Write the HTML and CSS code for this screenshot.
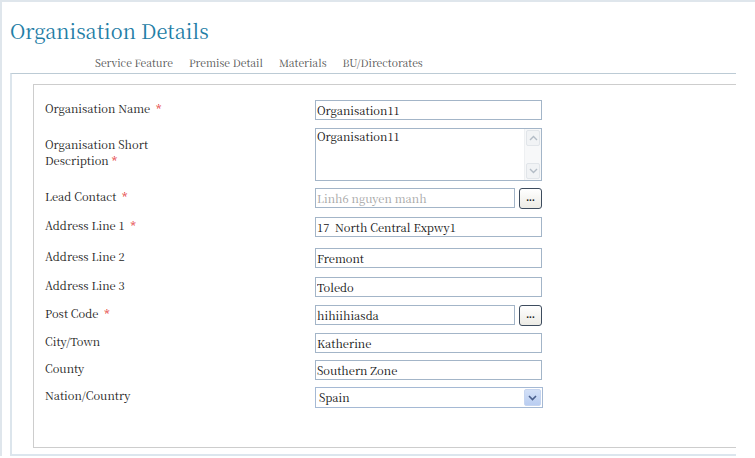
FILE: index.html
```html
<!DOCTYPE html>
<html>
<head>
<meta charset="utf-8">
<link rel="stylesheet" href="styles.css">
</head>
<body>
<div class="page">
  <h1 class="title">Organisation Details</h1>
  <nav class="tabs">
    <span class="tab">Service Feature</span>
    <span class="tab">Premise Detail</span>
    <span class="tab">Materials</span>
    <span class="tab">BU/Directorates</span>
  </nav>
  <div class="panel">
    <div class="inner">
      <div class="form">
        <div class="label">Organisation Name&nbsp; <span class="req">*</span></div>
        <div class="field"><input class="txt" type="text" value="Organisation11"></div>

        <div class="label label-multi">Organisation Short<br>Description <span class="req">*</span></div>
        <div class="field">
          <div class="textarea">
            <div class="ta-text">Organisation11</div>
            <div class="scrollbar">
              <div class="sb-btn"><svg width="9" height="6" viewBox="0 0 9 6"><path d="M1 5 L4.5 1.5 L8 5" fill="none" stroke="#b3bcc6" stroke-width="1.4"/></svg></div>
              <div class="sb-track"></div>
              <div class="sb-btn"><svg width="9" height="6" viewBox="0 0 9 6"><path d="M1 1 L4.5 4.5 L8 1" fill="none" stroke="#b3bcc6" stroke-width="1.4"/></svg></div>
            </div>
          </div>
        </div>

        <div class="label">Lead Contact&nbsp; <span class="req">*</span></div>
        <div class="field field-btn"><input class="txt txt-short txt-dim" type="text" value="Linh6 nguyen manh" readonly><button class="dots">...</button></div>

        <div class="label">Address Line 1&nbsp; <span class="req">*</span></div>
        <div class="field"><input class="txt" type="text" value="17  North Central Expwy1"></div>

        <div class="label">Address Line 2</div>
        <div class="field"><input class="txt" type="text" value="Fremont"></div>

        <div class="label">Address Line 3</div>
        <div class="field"><input class="txt" type="text" value="Toledo"></div>

        <div class="label">Post Code&nbsp; <span class="req">*</span></div>
        <div class="field field-btn"><input class="txt txt-short" type="text" value="hihiihiasda"><button class="dots">...</button></div>

        <div class="label">City/Town</div>
        <div class="field"><input class="txt" type="text" value="Katherine"></div>

        <div class="label">County</div>
        <div class="field"><input class="txt" type="text" value="Southern Zone"></div>

        <div class="label">Nation/Country</div>
        <div class="field">
          <div class="select">
            <span class="sel-text">Spain</span>
            <span class="sel-arrow"><svg width="9" height="6" viewBox="0 0 9 6"><path d="M1 1 L4.5 4.5 L8 1" fill="none" stroke="#4a5f8c" stroke-width="1.6"/></svg></span>
          </div>
        </div>
      </div>
    </div>
  </div>
</div>
</body>
</html>
```
FILE: styles.css
```css
html, body {
  margin: 0;
  padding: 0;
  background: #ffffff;
}
body {
  font-family: "Noto Serif CJK SC", "Noto Serif CJK JP", serif;
  color: #222;
}
.page {
  border-top: 2px solid #dfe6ec;
  border-left: 2px solid #dfe6ec;
  min-height: 456px;
  box-sizing: border-box;
}
.title {
  margin: 15px 0 0 8px;
  font-size: 20px;
  line-height: 28px;
  font-weight: normal;
  color: #1f7ea6;
}
.tabs {
  display: flex;
  gap: 16px;
  margin: 10px 0 0 93px;
  font-size: 10.4px;
  line-height: 16px;
  color: #555;
}
.panel {
  margin: 2px 0 0 8px;
  width: 726px;
  border-top: 1px solid #bccbd5;
  border-left: 2px solid #dce5ec;
  border-bottom: 2px solid #dce6ee;
  padding: 10px 0 6px 21px;
  box-sizing: border-box;
}
.inner {
  border-top: 1px solid #cdcdcd;
  border-left: 1px solid #cdcdcd;
  border-bottom: 1px solid #cdcdcd;
  padding: 15px 0 39px 11px;
}
.form {
  display: grid;
  grid-template-columns: 270px auto;
  grid-template-rows: 28px 60px 29px 31px 29px 28px 28px 27px 27px 21px;
  align-items: start;
}
.label {
  font-size: 11.2px;
  line-height: 16px;
  color: #222;
  white-space: nowrap;
}
.label-multi {
  padding-top: 8px;
}
.req {
  color: #e01010;
}
.field {
  display: flex;
}
.field-btn {
  gap: 4px;
  align-items: flex-start;
}
.txt {
  width: 227px;
  height: 20px;
  box-sizing: border-box;
  border: 1px solid #a3b5c8;
  padding: 0 1px;
  margin: 0;
  font-family: "Noto Serif CJK SC", "Noto Serif CJK JP", serif;
  font-size: 11.2px;
  color: #111;
  background: #fff;
  outline: none;
}
.txt-short {
  width: 200px;
}
.txt-dim {
  color: #a5a5a5;
}
.dots {
  width: 23px;
  height: 21px;
  box-sizing: border-box;
  border: 1px solid #3d4c5e;
  border-radius: 3px;
  background: linear-gradient(#ffffff, #ecebe5);
  padding: 0 0 2px 0;
  margin: 0;
  font-family: "Liberation Sans", Arial, sans-serif;
  font-size: 10px;
  font-weight: bold;
  line-height: 10px;
  color: #222;
}
.textarea {
  width: 227px;
  height: 53px;
  box-sizing: border-box;
  border: 1px solid #a3b5c8;
  display: flex;
  background: #fff;
}
.ta-text {
  flex: 1;
  font-size: 11.2px;
  line-height: 14px;
  padding: 0 1px;
  color: #111;
}
.scrollbar {
  width: 16px;
  display: flex;
  flex-direction: column;
  background: #f7f8f9;
  border-left: 1px solid #eef0f2;
}
.sb-btn {
  height: 14px;
  margin: 1px;
  background: #f1f3f5;
  border: 1px solid #e1e5e9;
  border-radius: 2px;
  display: flex;
  align-items: center;
  justify-content: center;
}
.sb-track {
  flex: 1;
}
.select {
  width: 228px;
  height: 21px;
  box-sizing: border-box;
  border: 1px solid #a5b9d4;
  display: flex;
  align-items: stretch;
  background: #fff;
}
.sel-text {
  flex: 1;
  font-size: 11.2px;
  line-height: 18px;
  padding-left: 3px;
  color: #111;
}
.sel-arrow {
  width: 15px;
  margin: 1px;
  background: linear-gradient(#d3e0f7, #b9cdf1);
  border: 1px solid #c6d5f0;
  border-radius: 2px;
  display: flex;
  align-items: center;
  justify-content: center;
}
```
